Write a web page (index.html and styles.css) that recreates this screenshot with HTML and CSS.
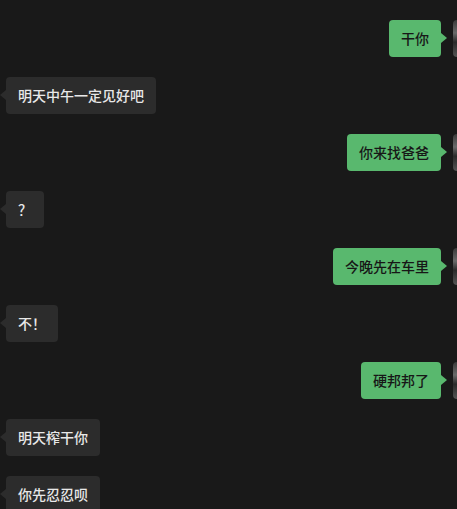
FILE: index.html
```html
<!DOCTYPE html>
<html lang="zh-CN">

<head>
  <meta charset="UTF-8">
  <title>聊天</title>
  <link rel="stylesheet" href="styles.css">
</head>

<body>
  <div class="screen">
    <div class="chat">
      <div class="row mine">
        <div class="bubble">干你</div>
        <div class="avatar"></div>
      </div>
      <div class="row theirs">
        <div class="bubble">明天中午一定见好吧</div>
      </div>
      <div class="row mine">
        <div class="bubble">你来找爸爸</div>
        <div class="avatar"></div>
      </div>
      <div class="row theirs">
        <div class="bubble">？</div>
      </div>
      <div class="row mine">
        <div class="bubble">今晚先在车里</div>
        <div class="avatar"></div>
      </div>
      <div class="row theirs">
        <div class="bubble">不！</div>
      </div>
      <div class="row mine">
        <div class="bubble">硬邦邦了</div>
        <div class="avatar"></div>
      </div>
      <div class="row theirs">
        <div class="bubble">明天榨干你</div>
      </div>
      <div class="row theirs">
        <div class="bubble">你先忍忍呗</div>
      </div>
    </div>
  </div>
</body>
</html>
```

FILE: styles.css
```css
html,
body {
  margin: 0;
  background: #191919;
}

body {
  font-family: "Noto Sans CJK SC", "Noto Sans", sans-serif;
  font-size: 14px;
}

.screen {
  width: 457px;
  height: 509px;
  overflow: hidden;
}

.chat {
  padding-top: 20px;
  display: flex;
  flex-direction: column;
  gap: 20px;
}

.row {
  display: flex;
  align-items: flex-start;
}

.row.mine {
  justify-content: flex-end;
}

.row.theirs {
  padding-left: 6px;
}

.bubble {
  position: relative;
  padding: 8px 12px;
  line-height: 21px;
  border-radius: 4px;
  font-weight: 500;
  white-space: nowrap;
}

.bubble::after {
  content: "";
  position: absolute;
  top: 13px;
  border: 5.5px solid transparent;
}

.mine .bubble {
  background: #59b86e;
  color: #171717;
  margin-right: 12px;
}

.mine .bubble::after {
  left: 100%;
  border-left: 6px solid #59b86e;
  border-right: 0;
}

.theirs .bubble {
  background: #2c2c2c;
  color: #e8e8e8;
}

.theirs .bubble::after {
  right: 100%;
  border-right: 6px solid #2c2c2c;
  border-left: 0;
}

/* avatar is cut off by the right edge, only a sliver shows */
.avatar {
  width: 4px;
  height: 37px;
  border-radius: 4px 0 0 4px;
  background: linear-gradient(180deg, #3a3a3a 0%, #6a6a6a 35%, #2a2a2a 60%, #555 100%);
}
```
